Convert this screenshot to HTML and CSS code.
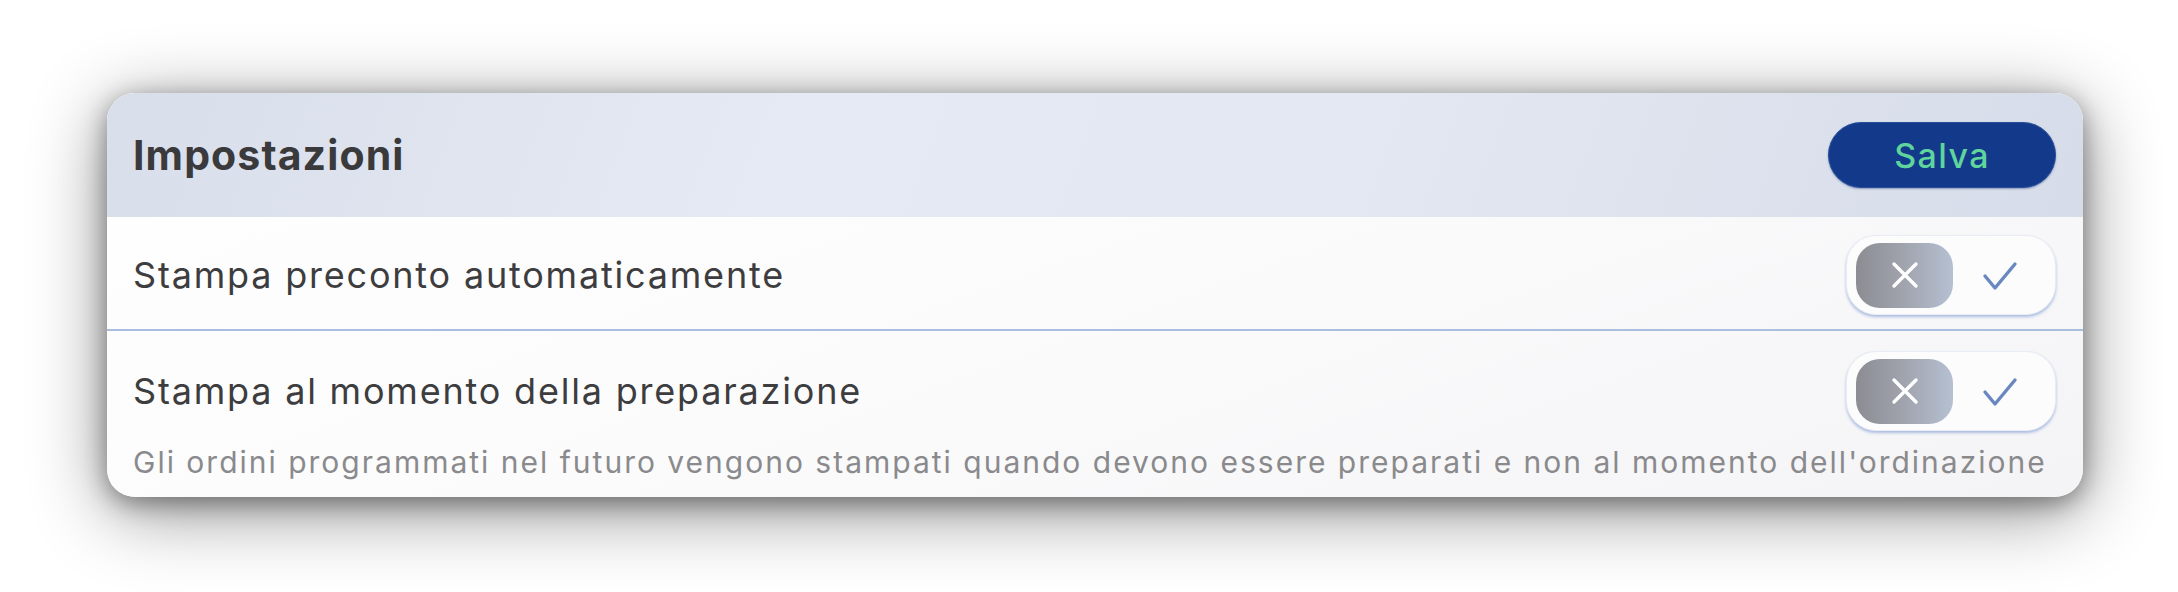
FILE: index.html
```html
<!DOCTYPE html>
<html lang="it">
<head>
<meta charset="utf-8">
<title>Impostazioni</title>
<link rel="stylesheet" href="styles.css">
</head>
<body>
<div class="page">
  <section class="card">
    <header class="card-header">
      <h1 class="title">Impostazioni</h1>
      <button class="save-btn" type="button">Salva</button>
    </header>
    <div class="row row-first">
      <span class="row-label">Stampa preconto automaticamente</span>
      <div class="toggle">
        <span class="knob">
          <svg class="icon-x" viewBox="0 0 28 28" width="28" height="28"><path d="M3 3 L25 25 M25 3 L3 25" fill="none" stroke="#ffffff" stroke-width="3.4" stroke-linecap="round"/></svg>
        </span>
        <span class="check-slot">
          <svg class="icon-check" viewBox="0 0 36 30" width="36" height="30"><path d="M3 15 L13 27 L33 3" fill="none" stroke="#6a87bf" stroke-width="3.4" stroke-linecap="round" stroke-linejoin="round"/></svg>
        </span>
      </div>
    </div>
    <div class="row-block">
      <div class="row row-second">
        <span class="row-label">Stampa al momento della preparazione</span>
        <div class="toggle">
          <span class="knob">
            <svg class="icon-x" viewBox="0 0 28 28" width="28" height="28"><path d="M3 3 L25 25 M25 3 L3 25" fill="none" stroke="#ffffff" stroke-width="3.4" stroke-linecap="round"/></svg>
          </span>
          <span class="check-slot">
            <svg class="icon-check" viewBox="0 0 36 30" width="36" height="30"><path d="M3 15 L13 27 L33 3" fill="none" stroke="#6a87bf" stroke-width="3.4" stroke-linecap="round" stroke-linejoin="round"/></svg>
          </span>
        </div>
      </div>
      <p class="desc">Gli ordini programmati nel futuro vengono stampati quando devono essere preparati e non al momento dell'ordinazione</p>
    </div>
  </section>
</div>
</body>
</html>
```

FILE: styles.css
```css
html, body {
  margin: 0;
  padding: 0;
  background: #ffffff;
}

body {
  font-family: Inter, "Noto Sans", "DejaVu Sans", sans-serif;
  width: 2178px;
  height: 592px;
  overflow: hidden;
}

.page {
  display: flex;
  padding: 93px 0 0 107px;
}

.card {
  width: 1976px;
  height: 404px;
  border-radius: 28px;
  overflow: hidden;
  background: linear-gradient(160deg, #ffffff 0%, #fbfbfc 50%, #f4f4f6 100%);
  box-shadow: 0 14px 75px rgba(0, 0, 0, 0.45), 0 6px 24px rgba(0, 0, 0, 0.38);
  display: flex;
  flex-direction: column;
}

.card-header {
  height: 124px;
  flex: none;
  display: flex;
  align-items: center;
  justify-content: space-between;
  padding: 0 27px 0 26px;
  background: linear-gradient(110deg, #d8deea 0%, #e6eaf4 35%, #e3e7f1 65%, #d6dce9 100%);
}

.title {
  margin: 0;
  font-size: 41px;
  font-weight: 700;
  color: #3a3a3c;
  letter-spacing: 1.1px;
}

.save-btn {
  width: 228px;
  height: 66px;
  border-radius: 33px;
  border: 1px solid #2a4f98;
  background: #13398a;
  color: #5fd49c;
  font-family: inherit;
  font-size: 34px;
  font-weight: 500;
  letter-spacing: 1.4px;
  padding: 0;
  box-shadow: 0 1px 2px rgba(20, 50, 120, 0.4);
}

.row {
  display: flex;
  align-items: center;
  justify-content: space-between;
  padding: 0 27px 0 26px;
}

.row-first {
  padding-top: 4px;
  box-sizing: border-box;
  height: 114px;
  border-bottom: 2px solid #aabfe0;
}

.row-label {
  font-size: 36px;
  color: #3d3d40;
  letter-spacing: 1.8px;
}

.toggle {
  width: 210px;
  height: 80px;
  box-sizing: border-box;
  border-radius: 30px;
  border: 1px solid #e9ecf3;
  background: #fcfcfd;
  box-shadow: 0 2px 3px rgba(110, 140, 205, 0.55);
  display: flex;
  align-items: center;
  padding: 0 8px 0 9px;
}

.knob {
  width: 97px;
  height: 65px;
  border-radius: 24px;
  background: linear-gradient(90deg, #8c8d93 0%, #a0a4ae 50%, #b5c0d2 100%);
  display: flex;
  align-items: center;
  justify-content: center;
  flex: none;
}

.check-slot {
  flex: 1;
  display: flex;
  align-items: center;
  justify-content: center;
}

.icon-check {
  margin-top: 2px;
}

.row-block {
  display: flex;
  flex-direction: column;
  padding-top: 20px;
}

.row-second {
  height: 80px;
}

.desc {
  margin: 11px 0 0 0;
  padding: 0 27px 0 26px;
  font-size: 30px;
  line-height: 40px;
  color: #8a8a8d;
  letter-spacing: 2px;
  white-space: nowrap;
}
```
